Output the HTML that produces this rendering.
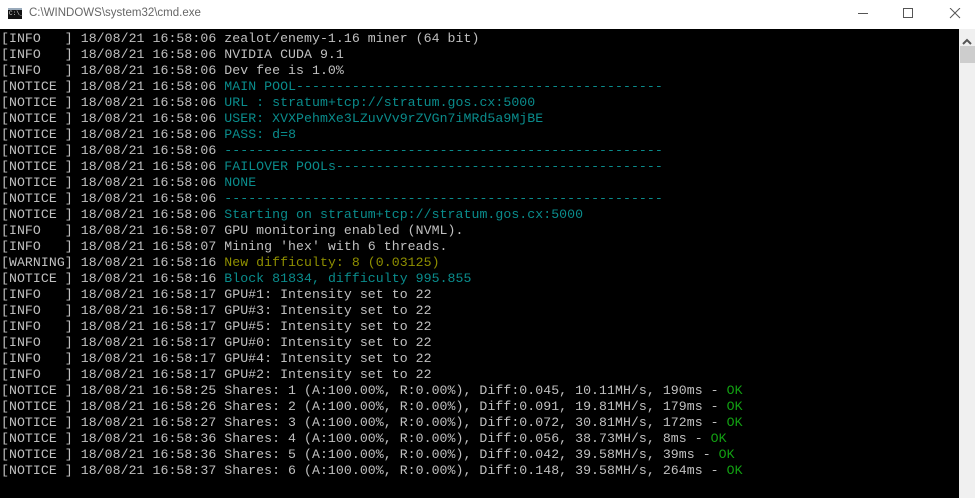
<!DOCTYPE html>
<html><head><meta charset="utf-8"><style>
body{margin:0;width:975px;height:498px;overflow:hidden;background:#000;font-family:"Liberation Sans",sans-serif;}
#tb{position:absolute;left:0;top:0;width:975px;height:29px;background:#fff;}
#ttl{position:absolute;left:29px;top:7px;font-size:11.5px;color:#666;}
#ico{position:absolute;left:8px;top:8px;width:14px;height:11px;background:#111;border-top:2px solid #9ab;box-sizing:border-box}
#ico span{position:absolute;left:1px;top:1px;font-size:6px;color:#ddd;font-family:"Liberation Mono",monospace;line-height:6px}
#con{position:absolute;left:0;top:29px;width:959px;height:469px;background:#000;}
#sb{position:absolute;left:959px;top:29px;width:16px;height:469px;background:#f0f0f0;}
#thumb{position:absolute;left:960px;top:46px;width:15px;height:17px;background:#cdcdcd}
pre{margin:0;position:absolute;left:1px;top:31px;font-family:"Liberation Mono",monospace;font-size:13.2px;letter-spacing:0.06px;line-height:16px;color:#c0c0c0;}
.c{color:#0a8c8c}.y{color:#8f8f00}.g{color:#12a012}
</style></head><body>
<div id="tb"><div id="ico"><span>C:\_</span></div><div id="ttl">C:\WINDOWS\system32\cmd.exe</div>
<svg style="position:absolute;left:855px;top:8px" width="110" height="12">
<line x1="3" y1="5.5" x2="13" y2="5.5" stroke="#555"/>
<rect x="48.5" y="0.5" width="9" height="9" fill="none" stroke="#555"/>
<path d="M95 0L105 10M105 0L95 10" stroke="#555"/></svg></div>
<div id="con"></div><div id="sb"><svg width="16" height="14" style="position:absolute;top:6px"><path d="M4 9L8 5L12 9" stroke="#555" stroke-width="2" fill="none"/></svg></div><div id="thumb"></div>
<pre>[INFO   ] 18/08/21 16:58:06 zealot/enemy-1.16 miner (64 bit)
[INFO   ] 18/08/21 16:58:06 NVIDIA CUDA 9.1
[INFO   ] 18/08/21 16:58:06 Dev fee is 1.0%
[NOTICE ] 18/08/21 16:58:06 <span class="c">MAIN POOL----------------------------------------------</span>
[NOTICE ] 18/08/21 16:58:06 <span class="c">URL : stratum+tcp://stratum.gos.cx:5000</span>
[NOTICE ] 18/08/21 16:58:06 <span class="c">USER: XVXPehmXe3LZuvVv9rZVGn7iMRd5a9MjBE</span>
[NOTICE ] 18/08/21 16:58:06 <span class="c">PASS: d=8</span>
[NOTICE ] 18/08/21 16:58:06 <span class="c">-------------------------------------------------------</span>
[NOTICE ] 18/08/21 16:58:06 <span class="c">FAILOVER POOLs-----------------------------------------</span>
[NOTICE ] 18/08/21 16:58:06 <span class="c">NONE</span>
[NOTICE ] 18/08/21 16:58:06 <span class="c">-------------------------------------------------------</span>
[NOTICE ] 18/08/21 16:58:06 <span class="c">Starting on stratum+tcp://stratum.gos.cx:5000</span>
[INFO   ] 18/08/21 16:58:07 GPU monitoring enabled (NVML).
[INFO   ] 18/08/21 16:58:07 Mining 'hex' with 6 threads.
[WARNING] 18/08/21 16:58:16 <span class="y">New difficulty: 8 (0.03125)</span>
[NOTICE ] 18/08/21 16:58:16 <span class="c">Block 81834, difficulty 995.855</span>
[INFO   ] 18/08/21 16:58:17 GPU#1: Intensity set to 22
[INFO   ] 18/08/21 16:58:17 GPU#3: Intensity set to 22
[INFO   ] 18/08/21 16:58:17 GPU#5: Intensity set to 22
[INFO   ] 18/08/21 16:58:17 GPU#0: Intensity set to 22
[INFO   ] 18/08/21 16:58:17 GPU#4: Intensity set to 22
[INFO   ] 18/08/21 16:58:17 GPU#2: Intensity set to 22
[NOTICE ] 18/08/21 16:58:25 Shares: 1 (A:100.00%, R:0.00%), Diff:0.045, 10.11MH/s, 190ms - <span class="g">OK</span>
[NOTICE ] 18/08/21 16:58:26 Shares: 2 (A:100.00%, R:0.00%), Diff:0.091, 19.81MH/s, 179ms - <span class="g">OK</span>
[NOTICE ] 18/08/21 16:58:27 Shares: 3 (A:100.00%, R:0.00%), Diff:0.072, 30.81MH/s, 172ms - <span class="g">OK</span>
[NOTICE ] 18/08/21 16:58:36 Shares: 4 (A:100.00%, R:0.00%), Diff:0.056, 38.73MH/s, 8ms - <span class="g">OK</span>
[NOTICE ] 18/08/21 16:58:36 Shares: 5 (A:100.00%, R:0.00%), Diff:0.042, 39.58MH/s, 39ms - <span class="g">OK</span>
[NOTICE ] 18/08/21 16:58:37 Shares: 6 (A:100.00%, R:0.00%), Diff:0.148, 39.58MH/s, 264ms - <span class="g">OK</span></pre>
</body></html>
